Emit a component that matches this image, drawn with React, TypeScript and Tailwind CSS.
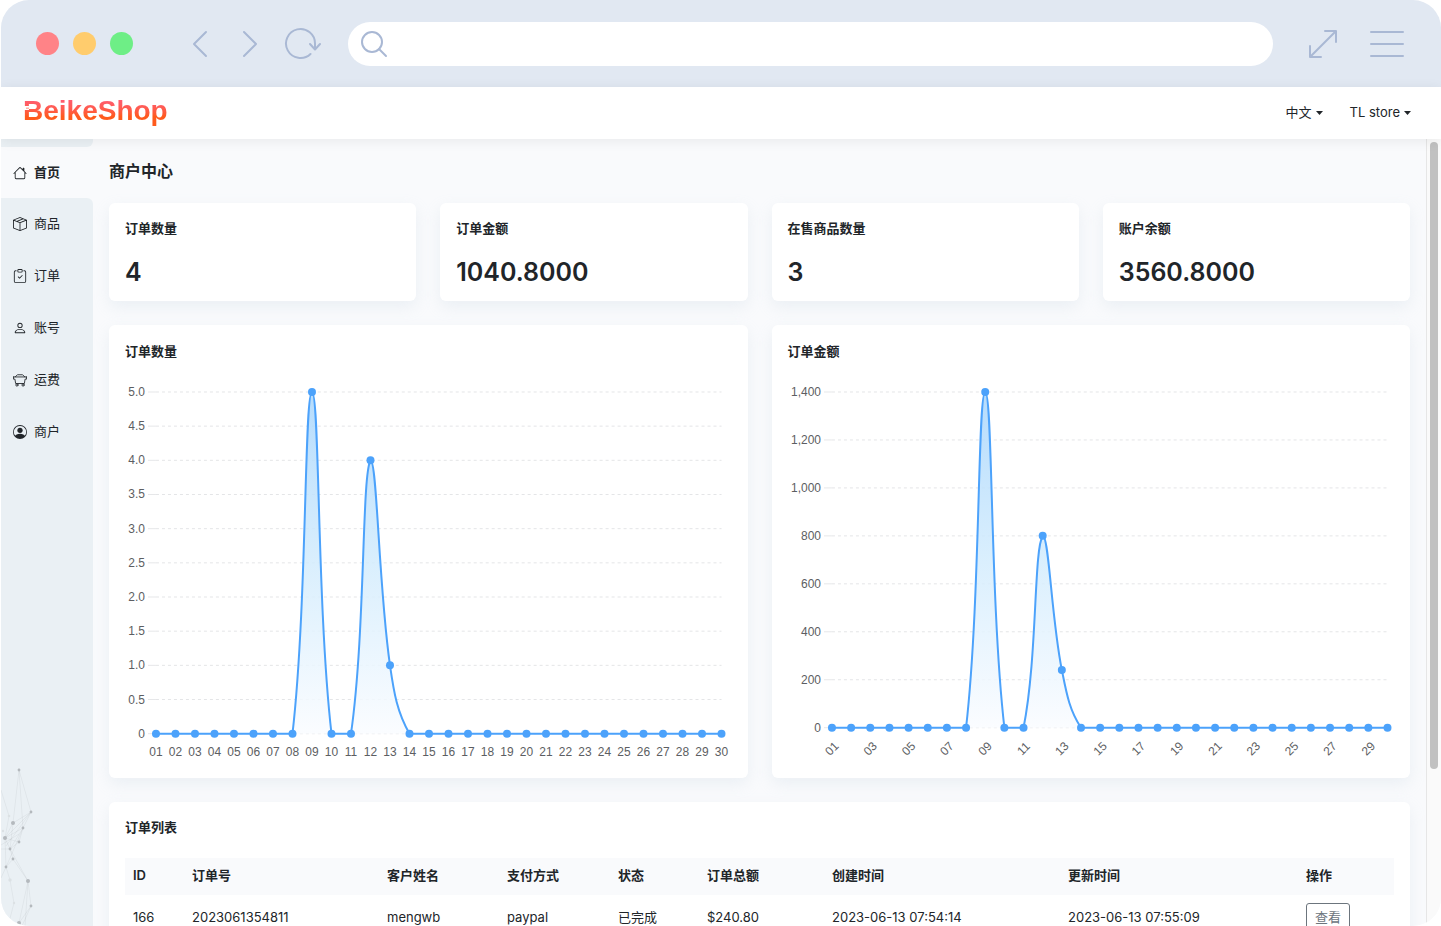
import { BsBoxSeam, BsClipboardCheck, BsHouse, BsPerson, BsPersonCircle } from "react-icons/bs";

const CartIcon = ({ className }: { className?: string }) => (
  <svg viewBox="0 0 16 16" fill="none" stroke="currentColor" strokeLinecap="round" strokeLinejoin="round" className={className}>
    <path d="M.5 4.500h2L5 2h6l2.500 2.500h2M.5 4.500v2.500h1.700l.8 5h10l.8-5h1.700V4.500M2.500 4.500h11" />
    <circle cx="4.500" cy="13.700" r="1.300" />
    <circle cx="11.500" cy="13.700" r="1.300" />
  </svg>
);

const navItems = [
  { icon: BsBoxSeam, label: "商品" },
  { icon: BsClipboardCheck, label: "订单" },
  { icon: BsPerson, label: "账号" },
  { icon: CartIcon, label: "运费" },
  { icon: BsPersonCircle, label: "商户" },
];

const stats = [
  { label: "订单数量", value: "4" },
  { label: "订单金额", value: "1040.8000" },
  { label: "在售商品数量", value: "3" },
  { label: "账户余额", value: "3560.8000" },
];

const days = Array.from({ length: 30 }, (_, i) => String(i + 1).padStart(2, "0"));

const series = (values: Record<string, number>) => days.map((d) => values[d] ?? 0);

const orderCounts = series({ "09": 5, "12": 4, "13": 1 });
const orderTotals = series({ "09": 1400, "12": 800, "13": 240.8 });

type Point = { x: number; y: number };

const SMOOTH = 0.4;

const clamp = (v: number, a: number, b: number) => Math.max(Math.min(v, Math.max(a, b)), Math.min(a, b));

// Smooth line whose control points never leave the box of the neighbouring points
function smoothPath(points: Point[]) {
  let d = `M${points[0].x} ${points[0].y}`;
  let c0 = points[0];
  for (let i = 1; i < points.length; i++) {
    const p = points[i];
    const prev = points[i - 1];
    const next = points[i + 1];
    let c1 = p;
    let nextC0 = p;
    if (next) {
      const lenPrev = Math.hypot(p.x - prev.x, p.y - prev.y);
      const lenNext = Math.hypot(next.x - p.x, next.y - p.y);
      const k = (SMOOTH * lenNext) / (lenNext + lenPrev);
      const vx = next.x - prev.x;
      const vy = next.y - prev.y;
      nextC0 = { x: clamp(p.x + vx * k, next.x, p.x), y: clamp(p.y + vy * k, next.y, p.y) };
      c1 = { x: clamp(p.x - vx * (SMOOTH - k), prev.x, p.x), y: clamp(p.y - vy * (SMOOTH - k), prev.y, p.y) };
    }
    d += `C${c0.x} ${c0.y} ${c1.x} ${c1.y} ${p.x} ${p.y}`;
    c0 = nextC0;
  }
  return d;
}

type ChartProps = {
  id: string;
  title: string;
  values: number[];
  ticks: string[];
  max: number;
  left: number;
  bottom: number;
  rotated?: boolean;
};

const LineChart = ({ id, title, values, ticks, max, left, bottom, rotated }: ChartProps) => {
  const top = 22;
  const right = rotated ? 600 : 597;
  const step = (right - left) / (values.length - 1);
  const points = values.map((v, i) => ({ x: left + i * step, y: bottom - (v / max) * (bottom - top) }));
  const line = smoothPath(points);

  return (
    <svg viewBox="0 0 607 392" className="block w-full h-auto" role="img" aria-label={title}>
      <defs>
        <linearGradient id={id} x1="0" y1="0" x2="0" y2="1">
          <stop offset="0" stopColor="#a9d6fc" />
          <stop offset="0.5" stopColor="#d3ecfd" />
          <stop offset="1" stopColor="#fafcff" />
        </linearGradient>
      </defs>
      {ticks.map((tick, i) => {
        const y = bottom - (i / (ticks.length - 1)) * (bottom - top);
        return (
          <g key={tick}>
            <line x1={left - 8} x2={left} y1={y} y2={y} stroke="#e6e7e9" />
            <line x1={left} x2={right} y1={y} y2={y} stroke="#e4e5e7" strokeDasharray="3 3" />
            <text x={left - 11} y={y + 4} textAnchor="end" className="fill-[#5c5e62] text-[12px]">{tick}</text>
          </g>
        );
      })}
      <path d={`${line}L${right} ${bottom}L${left} ${bottom}Z`} fill={`url(#${id})`} fillOpacity="0.85" />
      <path d={line} fill="none" stroke="#4ca2fb" strokeWidth="2" strokeLinejoin="bevel" />
      {points.map((p, i) => (
        <circle key={i} cx={p.x} cy={p.y} r="4" fill="#4ca2fb" />
      ))}
      {points.map((p, i) => {
        if (rotated && i % 2) return null;
        const y = bottom + (rotated ? 21 : 18);
        return (
          <text
            key={i}
            x={p.x}
            y={y}
            dy="4"
            textAnchor="middle"
            transform={rotated ? `rotate(-45 ${p.x} ${y})` : undefined}
            className="fill-[#5c5e62] text-[12px]"
          >
            {days[i]}
          </text>
        );
      })}
    </svg>
  );
};

const columns = [
  { label: "ID", width: "w-[59px]" },
  { label: "订单号", width: "w-[195px]" },
  { label: "客户姓名", width: "w-[120px]" },
  { label: "支付方式", width: "w-[111px]" },
  { label: "状态", width: "w-[89px]" },
  { label: "订单总额", width: "w-[125px]" },
  { label: "创建时间", width: "w-[236px]" },
  { label: "更新时间", width: "w-[238px]" },
  { label: "操作", width: "w-[96px]" },
];

const orders = [
  ["166", "2023061354811", "mengwb", "paypal", "已完成", "$240.80", "2023-06-13 07:54:14", "2023-06-13 07:55:09"],
];

const card = "bg-white rounded-md shadow-[0_6px_16px_rgba(180,200,215,0.2)]";

const BrowserBar = () => (
  <div className="flex items-center h-[87px] shrink-0 bg-[#e1e8f2] pl-[35px] pr-[37px] text-[#a9b8d4]">
    <div className="flex gap-[14px]">
      <span className="size-[23px] rounded-full bg-[#ff8387]" />
      <span className="size-[23px] rounded-full bg-[#ffcc6d]" />
      <span className="size-[23px] rounded-full bg-[#6eee86]" />
    </div>
    <div className="flex items-center ml-[59px]">
      <button aria-label="后退">
        <svg width="16" height="28" viewBox="0 0 16 28" fill="none" stroke="currentColor" strokeWidth="2" strokeLinecap="round" strokeLinejoin="round">
          <path d="M14 2 2 14l12 12" />
        </svg>
      </button>
      <button aria-label="前进" className="ml-[34px]">
        <svg width="16" height="28" viewBox="0 0 16 28" fill="none" stroke="currentColor" strokeWidth="2" strokeLinecap="round" strokeLinejoin="round">
          <path d="m2 2 12 12L2 26" />
        </svg>
      </button>
      <button aria-label="刷新" className="ml-[26px]">
        <svg width="38" height="34" viewBox="0 0 38 34" fill="none" stroke="currentColor" strokeWidth="2" strokeLinecap="round" strokeLinejoin="round">
          <path d="M26.500 27A14.500 14.500 0 1 1 31 17v5M26 17l5 5.500 5-5.500" />
        </svg>
      </button>
    </div>
    <label className="flex flex-1 items-center h-11 ml-[26px] pl-3 bg-white rounded-full">
      <svg width="28" height="28" viewBox="0 0 28 28" fill="none" stroke="currentColor" strokeWidth="2" strokeLinecap="round">
        <circle cx="12" cy="12" r="10" />
        <path d="m19 19 7 7" />
      </svg>
      <input type="text" aria-label="地址" className="flex-1 min-w-0 px-3 outline-none" />
    </label>
    <button aria-label="全屏" className="ml-[35px]">
      <svg width="30" height="30" viewBox="0 0 30 30" fill="none" stroke="currentColor" strokeWidth="2" strokeLinecap="round" strokeLinejoin="round">
        <path d="M17 2h11v11M28 2 2 28M2 17v11h11" />
      </svg>
    </button>
    <button aria-label="菜单" className="ml-8">
      <svg width="34" height="28" viewBox="0 0 34 28" fill="none" stroke="currentColor" strokeWidth="2" strokeLinecap="round">
        <path d="M1 2h32M1 14h32M1 26h32" />
      </svg>
    </button>
  </div>
);

const Header = () => (
  <header className="relative z-10 flex items-center justify-between h-[52px] shrink-0 bg-white pl-[22px] pr-[30px] shadow-[0_2px_12px_rgba(0,0,0,0.07)]">
    <a href="#" className="relative pb-1">
      <span className="block bg-gradient-to-b from-[#ff5c70] from-20% to-[#ff5a1c] to-65% bg-clip-text text-transparent text-[28px] leading-9 font-bold font-['Liberation_Sans',sans-serif]">
        BeikeShop
      </span>
      {/* notch in the stem of the B */}
      <svg width="8" height="8" viewBox="0 0 8 8" className="absolute left-0 top-[12px]">
        <path d="M0 1h6v4H0z" fill="#fff" />
        <path d="M3 2.500h3v1.500H3z" fill="#ffb3a8" />
      </svg>
    </a>
    <div className="flex gap-[27px] text-[13px]">
      <button className="flex items-center gap-1">
        中文
        <svg width="7" height="4" viewBox="0 0 7 4" fill="currentColor"><path d="M0 0h7L3.500 4z" /></svg>
      </button>
      <button className="flex items-center gap-1">
        TL store
        <svg width="7" height="4" viewBox="0 0 7 4" fill="currentColor"><path d="M0 0h7L3.500 4z" /></svg>
      </button>
    </div>
  </header>
);

const nodes = [
  [18, 20, 1], [30, 62, 1], [12, 73, 2], [22, 78, 1], [4, 88, 2], [18, 92, 1], [9, 99, 1],
  [12, 109, 1], [5, 117, 1], [27, 131, 2], [30, 156, 1], [18, 173, 2],
];

// Decorative constellation at the foot of the sidebar
const Constellation = () => (
  <svg width="92" height="176" viewBox="0 0 92 176" className="mt-auto shrink-0" aria-hidden="true">
    <g stroke="#000" strokeOpacity="0.08" strokeWidth="0.6" fill="none">
      <path d="M18 20 30 62 12 73 18 20 22 78 4 88 30 62 22 78 18 92 4 88 9 99 12 73 4 88 5 117 22 78 9 99 12 109 5 117 0 128M18 92 9 99H0M12 109 27 131 9 99M27 131 30 156 18 173 27 131 24 176M30 156 21 176M30 62 5 96M0 40 8 66 4 88M9 130 13 153 7 176M9 130 5 117M0 95 18 84" />
    </g>
    {nodes.map(([x, y, r]) => (
      <circle key={`${x}-${y}`} cx={x} cy={y} r={r === 2 ? 2 : 1.4} fill="#b4b9bd" />
    ))}
    <g fill="#dce1e4">
      <circle cx="8" cy="66" r="1.300" />
      <circle cx="9" cy="130" r="1.700" />
      <circle cx="13" cy="153" r="1.200" />
      <circle cx="2" cy="81" r="1.200" />
    </g>
  </svg>
);

const Sidebar = () => (
  <aside className="flex flex-col w-[92px] shrink-0 bg-[#f9fafc]">
    <div className="h-2 shrink-0 bg-[#eaf0f4] rounded-br-md" />
    <nav className="flex flex-col flex-1 min-h-0">
      <a href="#" aria-current="page" className="flex items-center gap-[7px] h-[51px] shrink-0 pl-3 text-[13px] font-semibold">
        <BsHouse className="size-[14px]" />
        首页
      </a>
      <div className="flex flex-col flex-1 min-h-0 bg-[#eaf0f4] rounded-tr-md">
        {navItems.map((item) => (
          <a key={item.label} href="#" className="flex items-center gap-[7px] h-[52px] shrink-0 pl-3 text-[13px]">
            <item.icon className="size-[14px]" />
            {item.label}
          </a>
        ))}
        <Constellation />
      </div>
    </nav>
  </aside>
);

const App = () => {
  return (
    <div className="flex flex-col h-screen ml-px overflow-hidden rounded-[28px] bg-white text-[#212529] font-[Inter,'Noto_Sans_CJK_SC',sans-serif]">
      <BrowserBar />
      <Header />
      <div className="flex flex-1 min-h-0 bg-[#f9fafc]">
        <Sidebar />
        <main className="flex-1 min-w-0 overflow-hidden px-4">
          <h1 className="py-5 text-base leading-6 font-semibold">商户中心</h1>

          <div className="grid grid-cols-4 gap-6">
            {stats.map((s) => (
              <section key={s.label} className={`${card} px-4 pt-[15px] pb-3`}>
                <h2 className="text-[13px] leading-5 font-semibold">{s.label}</h2>
                <p className="mt-[17px] text-[25px] leading-[34px] font-semibold">{s.value}</p>
              </section>
            ))}
          </div>

          <div className="grid grid-cols-2 gap-6 mt-6">
            <section className={`${card} p-4`}>
              <h2 className="mb-[9px] text-[13px] leading-5 font-semibold">订单数量</h2>
              <div className="font-['Liberation_Sans',sans-serif]">
                <LineChart
                  id="count-fill"
                  title="订单数量"
                  values={orderCounts}
                  ticks={["0", "0.5", "1.0", "1.5", "2.0", "2.5", "3.0", "3.5", "4.0", "4.5", "5.0"]}
                  max={5}
                  left={31}
                  bottom={364}
                />
              </div>
            </section>
            <section className={`${card} p-4`}>
              <h2 className="mb-[9px] text-[13px] leading-5 font-semibold">订单金额</h2>
              <div className="font-['Liberation_Sans',sans-serif]">
                <LineChart
                  id="total-fill"
                  title="订单金额"
                  values={orderTotals}
                  ticks={["0", "200", "400", "600", "800", "1,000", "1,200", "1,400"]}
                  max={1400}
                  left={44}
                  bottom={358}
                  rotated
                />
              </div>
            </section>
          </div>

          <section className={`${card} mt-6 px-4 pt-[15px]`}>
            <h2 className="mb-[21px] text-[13px] leading-5 font-semibold">订单列表</h2>
            <table className="w-full table-fixed text-left text-[13px]">
              <thead>
                <tr className="h-[37px] bg-[#f9fafc]">
                  {columns.map((c) => (
                    <th key={c.label} scope="col" className={`${c.width} px-2 font-semibold`}>{c.label}</th>
                  ))}
                </tr>
              </thead>
              <tbody>
                {orders.map((row) => (
                  <tr key={row[1]} className="h-[46px] whitespace-nowrap">
                    {row.map((cell, i) => (
                      <td key={i} className="px-2">{cell}</td>
                    ))}
                    <td className="px-2">
                      <button className="h-[30px] px-2 border border-[#6c757d] rounded-[3px] text-[#6c757d]">查看</button>
                    </td>
                  </tr>
                ))}
              </tbody>
            </table>
          </section>
        </main>
        <div className="w-[15px] shrink-0 border-l border-[#e6e6e6] bg-[#fafafa] pl-[3px] pt-[3px]">
          <div className="w-2 h-[80%] rounded-full bg-[#c1c1c1]" />
        </div>
      </div>
    </div>
  );
};

export default App;
